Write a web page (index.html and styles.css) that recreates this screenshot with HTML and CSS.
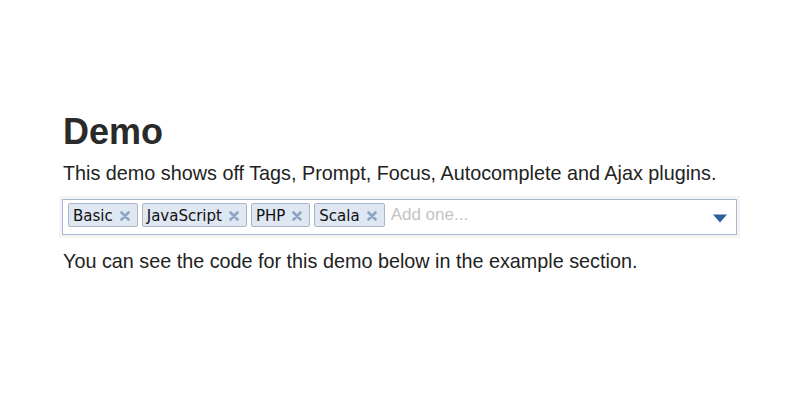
FILE: index.html
```html
<!DOCTYPE html>
<html>
<head>
<meta charset="utf-8">
<link rel="stylesheet" href="styles.css">
</head>
<body>
<div class="page">
  <h1 class="title">Demo</h1>
  <p class="lead">This demo shows off Tags, Prompt, Focus, Autocomplete and Ajax plugins.</p>
  <div class="tagbox">
    <div class="tags">
      <span class="tag"><span class="tag-label">Basic</span><svg class="tag-x" width="10" height="10" viewBox="0 0 10 10"><path d="M1.5 1.5 L8.5 8.5 M8.5 1.5 L1.5 8.5" stroke="#8fa4c4" stroke-width="2.6" stroke-linecap="round"/></svg></span>
      <span class="tag"><span class="tag-label">JavaScript</span><svg class="tag-x" width="10" height="10" viewBox="0 0 10 10"><path d="M1.5 1.5 L8.5 8.5 M8.5 1.5 L1.5 8.5" stroke="#8fa4c4" stroke-width="2.6" stroke-linecap="round"/></svg></span>
      <span class="tag"><span class="tag-label">PHP</span><svg class="tag-x" width="10" height="10" viewBox="0 0 10 10"><path d="M1.5 1.5 L8.5 8.5 M8.5 1.5 L1.5 8.5" stroke="#8fa4c4" stroke-width="2.6" stroke-linecap="round"/></svg></span>
      <span class="tag"><span class="tag-label">Scala</span><svg class="tag-x" width="10" height="10" viewBox="0 0 10 10"><path d="M1.5 1.5 L8.5 8.5 M8.5 1.5 L1.5 8.5" stroke="#8fa4c4" stroke-width="2.6" stroke-linecap="round"/></svg></span>
      <span class="placeholder">Add one...</span>
    </div>
    <svg class="arrow" width="14" height="9" viewBox="0 0 14 9"><path d="M0 0.5 H14 L7 8.5 Z" fill="#2b5f9e"/></svg>
  </div>
  <p class="note">You can see the code for this demo below in the example section.</p>
</div>
</body>
</html>
```
FILE: styles.css
```css
html, body {
  margin: 0;
  padding: 0;
  background: #ffffff;
}
.page {
  padding: 112px 63px 0 62px;
  font-family: "Liberation Sans", Arial, sans-serif;
  color: #2b2b2b;
}
.title {
  margin: 0;
  font-size: 36px;
  line-height: 40px;
  font-weight: bold;
  color: #2a2a2a;
  padding-left: 1px;
}
.lead {
  margin: 10px 0 0 1px;
  font-size: 19.8px;
  line-height: 22px;
  color: #222;
}
.tagbox {
  margin-top: 15px;
  height: 31px;
  border: 1px solid #a8b8d0;
  box-shadow: 0 0 0 3px #f4f4f4;
  display: flex;
  align-items: flex-start;
  justify-content: space-between;
  padding: 3px 0 0 5px;
}
.tags {
  display: flex;
  align-items: center;
  gap: 4px;
}
.tag {
  display: flex;
  align-items: center;
  height: 22px;
  border: 1px solid #a9b7cc;
  border-radius: 2px;
  background: #dfe7f2;
  padding: 1px 7px 0 4px;
  box-sizing: border-box;
  height: 24px;
  font-family: "DejaVu Sans", Tahoma, sans-serif;
  font-size: 15px;
  color: #111;
}
.tag-x {
  margin-left: 7px;
}
.placeholder {
  margin-left: 2px;
  font-size: 17px;
  color: #c3c3c3;
  font-family: "Liberation Sans", Arial, sans-serif;
}
.arrow {
  margin: 11px 9px 0 0;
}
.note {
  margin: 15px 0 0 1px;
  font-size: 19.8px;
  line-height: 22px;
  color: #222;
}
```
